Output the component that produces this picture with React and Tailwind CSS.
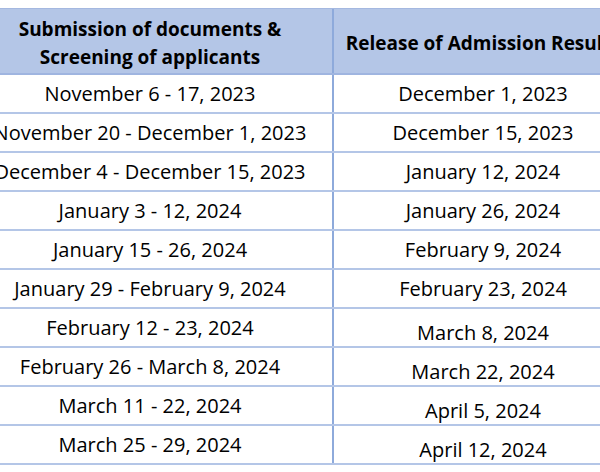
import React from 'react';

const rows = [
  ['November 6 - 17, 2023', 'December 1, 2023', false],
  ['November 20 - December 1, 2023', 'December 15, 2023', false],
  ['December 4 - December 15, 2023', 'January 12, 2024', false],
  ['January 3 - 12, 2024', 'January 26, 2024', false],
  ['January 15 - 26, 2024', 'February 9, 2024', false],
  ['January 29 - February 9, 2024', 'February 23, 2024', false],
  ['February 12 - 23, 2024', 'March 8, 2024', true],
  ['February 26 - March 8, 2024', 'March 22, 2024', true],
  ['March 11 - 22, 2024', 'April 5, 2024', true],
  ['March 25 - 29, 2024', 'April 12, 2024', true],
];

export default function App() {
  return (
    <div className="w-[600px] h-[472px] overflow-hidden bg-white pt-[8px] font-['Open_Sans',sans-serif] text-[20px] text-black">
      <div className="ml-[-32px] w-[664px]">
        {/* Header */}
        <div className="grid grid-cols-[366px_298px] h-[67px] bg-[#b4c6e7] border-t border-[#a4b8e0] border-b-2 border-b-[#9fb5e0] font-bold text-[19px] leading-[28px]">
          <div className="flex items-center justify-center text-center border-r-2 border-[#8eaadb] pt-[4px]">
            <span>Submission of documents &amp;<br />Screening of applicants</span>
          </div>
          <div className="flex items-center justify-center whitespace-nowrap pt-[4px]">
            Release of Admission Results
          </div>
        </div>

        {/* Rows */}
        {rows.map(([period, release, low]) => (
          <div
            key={period}
            className="grid grid-cols-[366px_298px] h-[39px] border-b-2 border-[#b4c6e7] leading-none"
          >
            <div className="flex items-center justify-center whitespace-nowrap border-r-2 border-[#8eaadb]">
              {period}
            </div>
            <div className={`flex items-center justify-center whitespace-nowrap ${low ? 'pt-[11px]' : ''}`}>
              {release}
            </div>
          </div>
        ))}
      </div>
    </div>
  );
}
